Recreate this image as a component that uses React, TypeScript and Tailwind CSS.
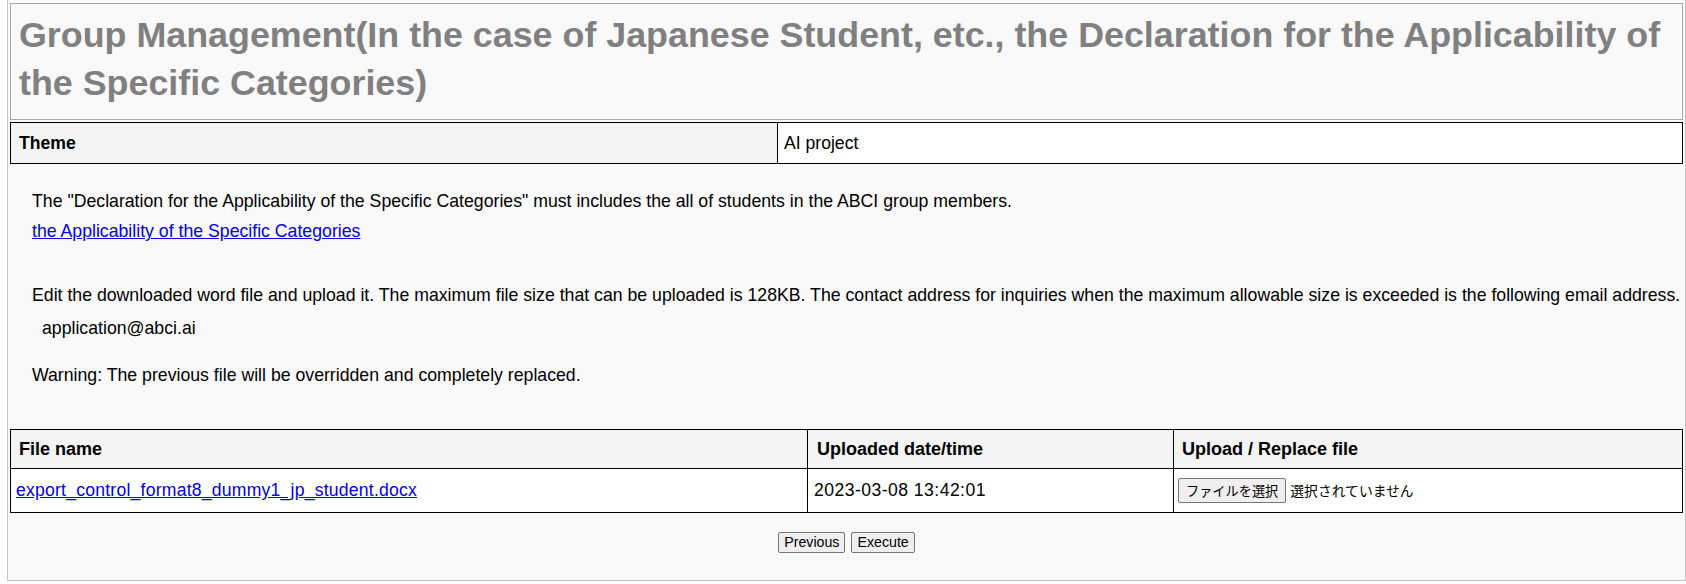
import React from "react";

export default function App() {
  return (
    <div className="min-h-screen bg-white text-black" style={{ fontFamily: '"Liberation Sans", Arial, "Noto Sans CJK JP", sans-serif' }}>
      <div className="ml-[7px] border-x border-b border-[#c4c4c4] bg-[#f9f9f9] pt-[3px] px-[2px] pb-[27px]">
        <div className="h-[117px] border border-[#a8a8a8] bg-[#f9f9f9] pl-[8px] pt-[7px]">
          <h1 className="text-[35.85px] font-bold leading-[48.4px] text-[#808080]">
            Group Management(In the case of Japanese Student, etc., the Declaration for the Applicability of the Specific Categories)
          </h1>
        </div>

        <div className="mt-[2px] grid h-[42px] grid-cols-[766px_1fr] border border-black text-[17.6px]">
          <div className="flex items-center bg-[#f4f4f4] pl-[8px] font-bold">Theme</div>
          <div className="flex items-center border-l border-black bg-white pl-[6px]">AI project</div>
        </div>

        <div className="mt-[22px] pl-[22px] text-[17.7px] leading-[30px]">
          <div>
            The &quot;Declaration for the Applicability of the Specific Categories&quot; must includes the all of students in the ABCI group members.
          </div>
          <div>
            <a href="#" className="text-[#0000ee] underline">the Applicability of the Specific Categories</a>
          </div>
          <div className="mt-[34px] whitespace-nowrap">
            Edit the downloaded word file and upload it. The maximum file size that can be uploaded is 128KB. The contact address for inquiries when the maximum allowable size is exceeded is the following email address.
          </div>
          <div className="mt-[3px] pl-[10px]">application@abci.ai</div>
          <div className="mt-[17px]">Warning: The previous file will be overridden and completely replaced.</div>
        </div>

        <div className="mt-[39px] border border-black text-[17.6px]">
          <div className="grid h-[39px] grid-cols-[796px_366px_1fr] border-b border-black bg-[#f4f4f4] text-[18px] font-bold">
            <div className="flex items-center pl-[8px]">File name</div>
            <div className="flex items-center border-l border-black pl-[9px]">Uploaded date/time</div>
            <div className="flex items-center border-l border-black pl-[8px]">Upload / Replace file</div>
          </div>
          <div className="grid h-[43px] grid-cols-[796px_366px_1fr] bg-white">
            <div className="flex items-center pl-[5px]">
              <a href="#" className="tracking-[0.22px] text-[#0000ee] underline">export_control_format8_dummy1_jp_student.docx</a>
            </div>
            <div className="flex items-center border-l border-black pl-[6px] tracking-[0.45px]">2023-03-08 13:42:01</div>
            <div className="flex items-center border-l border-black pl-[4px]">
              <span
                className="flex h-[25px] items-center rounded-[2px] border border-[#767676] bg-[#efefef] px-[7px] text-[13.2px] text-black"
                style={{ fontFamily: '"Noto Sans CJK JP", sans-serif' }}
              >
                ファイルを選択
              </span>
              <span className="ml-[4px] text-[13.8px]" style={{ fontFamily: '"Noto Sans CJK JP", sans-serif' }}>
                選択されていません
              </span>
            </div>
          </div>
        </div>

        <div className="mt-[19px] flex justify-center gap-[6px]">
          <button className="h-[21px] rounded-[2px] border border-[#767676] bg-[#efefef] px-[5px] text-[14.2px] leading-none text-black">
            Previous
          </button>
          <button className="h-[21px] rounded-[2px] border border-[#767676] bg-[#efefef] px-[5px] text-[14.2px] leading-none text-black">
            Execute
          </button>
        </div>
      </div>
    </div>
  );
}
